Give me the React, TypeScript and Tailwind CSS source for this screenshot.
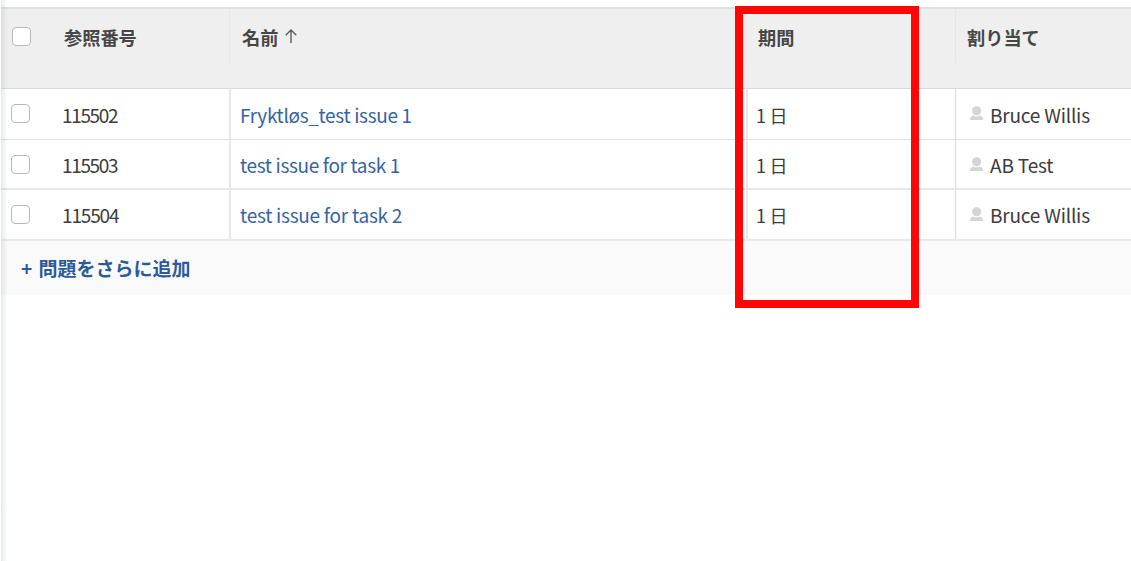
import type { ReactNode } from "react";

const rows = [
  { id: "115502", idFit: "tracking-[-1.35px]", name: "Fryktløs_test issue 1", nameFit: "tracking-[-0.33px]", owner: "Bruce Willis", ownerFit: "tracking-[-0.2px]", box: "h-[51px] border-b border-[#dedede]", top: "pt-[13px]" },
  { id: "115503", idFit: "tracking-[-1.35px]", name: "test issue for task 1", nameFit: "tracking-[-0.35px]", owner: "AB Test", ownerFit: "tracking-[-0.15px]", box: "h-[50px] border-b-2 border-[#e8e8e8]", top: "pt-3" },
  { id: "115504", idFit: "tracking-[-1.15px]", name: "test issue for task 2", nameFit: "tracking-[-0.25px]", owner: "Bruce Willis", ownerFit: "tracking-[-0.2px]", box: "h-[51px] border-b-2 border-[#e8e8e8]", top: "pt-3" },
];

const columns = "grid grid-cols-[229px_517px_209px_176px]";

function Checkbox({ className }: { className: string }) {
  return (
    <span
      role="checkbox"
      aria-checked="false"
      className={`size-[19px] shrink-0 rounded-[4px] border border-[#b9b9b9] bg-white ${className}`}
    />
  );
}

function HeaderCell({ children, className }: { children: ReactNode; className: string }) {
  return (
    <div className={`flex h-[54px] items-start border-l border-[#e7e7e7] pt-[15px] text-[18.2px] leading-[26px] font-bold ${className}`}>
      {children}
    </div>
  );
}

function UserIcon() {
  return (
    <svg width="14" height="14" viewBox="0 0 14 14" fill="#d5d5d5" className="mt-[17px] shrink-0">
      <circle cx="6.6" cy="4.8" r="4.6" />
      <path d="M0 14C0 11.4 1.4 9.8 3.4 9.4C5.2 10.8 8 10.8 9.8 9.4C11.8 9.8 13.2 11.4 13.2 14Z" />
    </svg>
  );
}

export default function App() {
  return (
    <div
      lang="ja"
      className="relative h-[561px] w-[1131px] overflow-hidden bg-white pt-[7px] font-['Noto_Sans_CJK_JP','Noto_Sans',sans-serif] text-[#3c3c3c]"
    >
      <div className={`${columns} h-[82px] border-t-2 border-b border-t-[#e0e0e0] border-b-[#dadada] bg-[#efefef] text-[#464646]`}>
        <div className="flex items-start pl-3">
          <Checkbox className="mt-[18px]" />
          <div className="pt-[15px] pl-[33px] text-[18.2px] leading-[26px] font-bold">参照番号</div>
        </div>
        <HeaderCell className="pl-3">
          <span>名前</span>
          <svg width="12" height="14" viewBox="0 0 12 14" fill="none" stroke="#5c5c5c" strokeWidth="1.4" className="mt-[5px] ml-[7px]">
            <path d="M6 14V1M0.7 6.2L6 1L11.3 6.2" />
          </svg>
        </HeaderCell>
        <HeaderCell className="pl-[11px]">期間</HeaderCell>
        <HeaderCell className="pl-[11px]">割り当て</HeaderCell>
      </div>

      {rows.map((row) => (
        <div key={row.id} className={`${columns} ${row.box} text-[19px] leading-[26px]`}>
          <div className="flex items-start pl-[11px]">
            <Checkbox className="mt-[15px]" />
            <span className={`pl-8 ${row.top} ${row.idFit}`}>{row.id}</span>
          </div>
          <div className={`border-l-2 border-[#e8e8e8] pl-[9px] text-[#3464a3] ${row.top} ${row.nameFit}`}>{row.name}</div>
          <div className={`border-l-2 border-[#e8e8e8] pl-2 text-[18px] tracking-[-0.3px] ${row.top}`}>1 日</div>
          <div className="flex items-start border-l border-[#dcdcdc] pl-[14px]">
            <UserIcon />
            <span className={`pl-[6px] ${row.top} ${row.ownerFit}`}>{row.owner}</span>
          </div>
        </div>
      ))}

      <div className="h-[54px] bg-[#fafafa] pt-[14px] pl-[21px] text-[19px] leading-[26px] font-bold text-[#2c5a9e] [word-spacing:2px]">
        + 問題をさらに追加
      </div>

      <div className="absolute inset-y-0 left-0 w-2 bg-linear-to-r from-[#8fa0b0]/25 to-transparent" />
      <div className="absolute inset-y-0 left-0 w-px bg-white" />
      <div className="absolute top-[6px] left-[735px] h-[302px] w-[184px] border-8 border-[#ff0505]" />
    </div>
  );
}
